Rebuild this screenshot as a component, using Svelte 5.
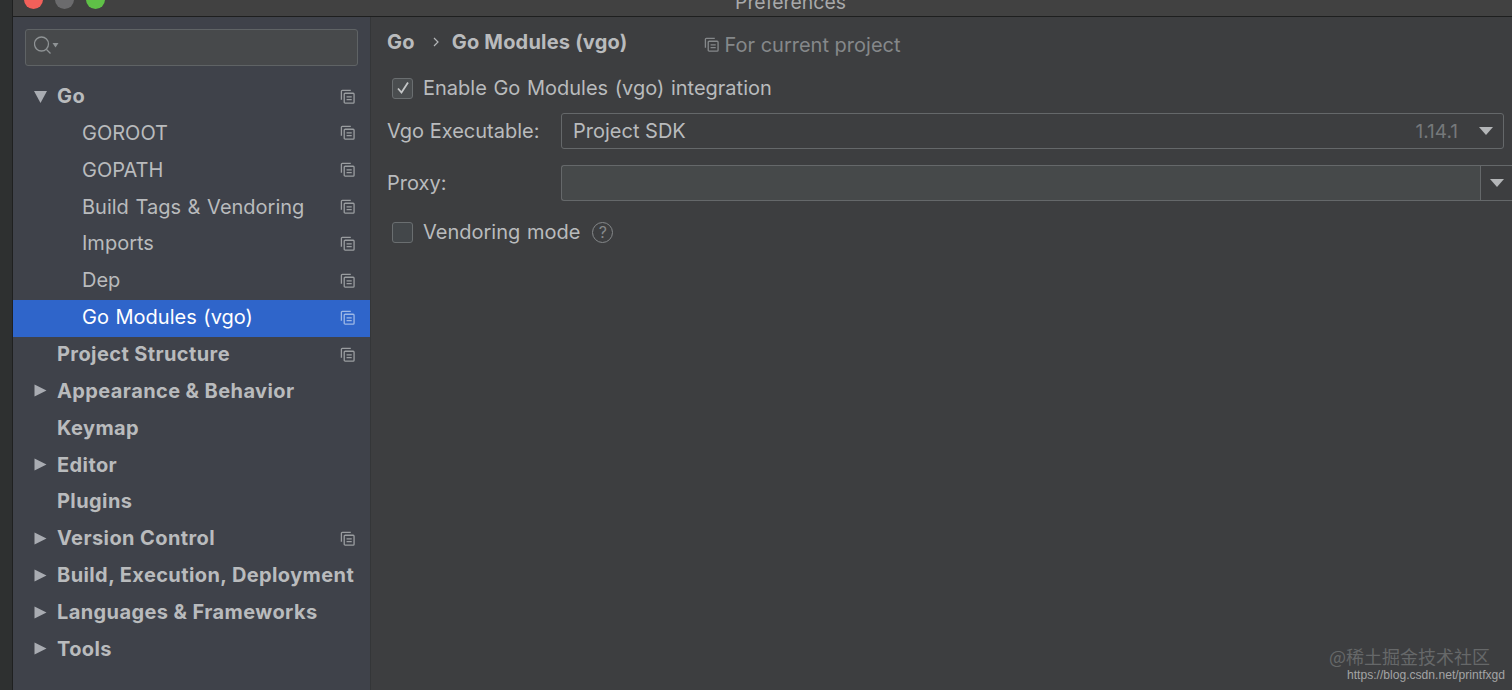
<script>
	const tree = [
		{ label: "Go", bold: true, arrow: "down", copy: true },
		{ label: "GOROOT", child: true, copy: true },
		{ label: "GOPATH", child: true, copy: true },
		{ label: "Build Tags & Vendoring", child: true, copy: true },
		{ label: "Imports", child: true, copy: true },
		{ label: "Dep", child: true, copy: true },
		{ label: "Go Modules (vgo)", child: true, copy: true, selected: true },
		{ label: "Project Structure", bold: true, copy: true },
		{ label: "Appearance & Behavior", bold: true, arrow: "right" },
		{ label: "Keymap", bold: true },
		{ label: "Editor", bold: true, arrow: "right" },
		{ label: "Plugins", bold: true },
		{ label: "Version Control", bold: true, arrow: "right", copy: true },
		{ label: "Build, Execution, Deployment", bold: true, arrow: "right" },
		{ label: "Languages & Frameworks", bold: true, arrow: "right" },
		{ label: "Tools", bold: true, arrow: "right" },
	]
</script>

{#snippet copyIcon()}
	<svg class="copy" width="15" height="15" viewBox="0 0 16 16" fill="none" stroke="currentColor" stroke-width="1.4">
		<path d="M11.5 1.500H2.500a1 1 0 0 0-1 1V11.500" />
		<rect x="4.500" y="4.500" width="10.500" height="10.500" rx="1" />
		<path d="M7 8.300h5.500M7 11.300h5.500" />
	</svg>
{/snippet}

<div class="screen">
	<div class="strip"></div>
	<div class="window">
		<header class="titlebar">
			<div class="lights">
				<span class="light red"></span>
				<span class="light grey"></span>
				<span class="light green"></span>
			</div>
			<span class="title">Preferences</span>
		</header>

		<div class="body">
			<aside class="sidebar">
				<div class="search">
					<svg width="26" height="24" viewBox="0 0 26 24" fill="none" stroke="#8f9395" stroke-width="1.300">
						<circle cx="7.500" cy="9" r="7" />
						<path d="M12.500 14.500l4 4" />
						<path d="M18.500 8h6l-3 4.500z" fill="#8f9395" stroke="none" />
					</svg>
				</div>
				<nav class="tree">
					{#each tree as row}
						<div class="row" class:child={row.child} class:bold={row.bold} class:selected={row.selected}>
							{#if row.arrow === "down"}
								<svg class="arrow" width="15" height="15" viewBox="0 0 15 15"><path d="M1 2h13l-6.500 12z" fill="#a9acb2" /></svg>
							{:else if row.arrow === "right"}
								<svg class="arrow" width="15" height="15" viewBox="0 0 15 15"><path d="M1.500 1.500l12 6-12 6z" fill="#a9acb2" /></svg>
							{/if}
							<span class="label">{row.label}</span>
							{#if row.copy}
								{@render copyIcon()}
							{/if}
						</div>
					{/each}
				</nav>
			</aside>

			<main class="content">
				<div class="crumbs">
					<span class="crumb">Go</span>
					<svg class="sep" width="8" height="12" viewBox="0 0 8 12" fill="none" stroke="#b4b6b8" stroke-width="1.200"><path d="M2 2l4 4-4 4" /></svg>
					<span class="crumb">Go Modules (vgo)</span>
					<span class="scope">
						{@render copyIcon()}
						For current project
					</span>
				</div>

				<div class="check-row first">
					<span class="box checked">
						<svg width="16" height="16" viewBox="0 0 16 16" fill="none" stroke="#c4c6c7" stroke-width="1.800"><path d="M3 8.500l3.500 4L13 2.500" /></svg>
					</span>
					<span>Enable Go Modules (vgo) integration</span>
				</div>

				<div class="field exec">
					<span class="field-label">Vgo Executable:</span>
					<div class="combo">
						<span>Project SDK</span>
						<span class="version">1.14.1</span>
						<svg class="caret" width="14" height="8" viewBox="0 0 14 8"><path d="M0 0h14l-7 8z" fill="#b4b6b8" /></svg>
					</div>
				</div>

				<div class="field proxy">
					<span class="field-label">Proxy:</span>
					<div class="proxy-input">
						<div class="proxy-text"></div>
						<div class="proxy-btn">
							<svg width="14" height="8" viewBox="0 0 14 8"><path d="M0 0h14l-7 8z" fill="#b4b6b8" /></svg>
						</div>
					</div>
				</div>

				<div class="check-row last">
					<span class="box"></span>
					<span>Vendoring mode</span>
					<span class="help">?</span>
				</div>

				<div class="watermark">
					<span class="wm-cn">@稀土掘金技术社区</span>
					<span class="wm-url">https://blog.csdn.net/printfxgd</span>
				</div>
			</main>
		</div>
	</div>
</div>

<style>
	:global(body) {
		margin: 0;
		background: #3d3e40;
	}

	.screen {
		display: flex;
		height: 690px;
		overflow: hidden;
		font-family: Inter, "Noto Sans", sans-serif;
		color: #b9bbbd;
	}

	.strip {
		width: 12px;
		flex: none;
		background: #2e3030;
		border-right: 1px solid #1f2020;
	}

	.window {
		flex: 1;
		display: flex;
		flex-direction: column;
		min-width: 0;
	}

	.titlebar {
		position: relative;
		height: 16px;
		flex: none;
		background: #414141;
		border-bottom: 1px solid #1e1f1f;
	}

	.lights {
		display: flex;
		gap: 12px;
		padding-left: 11px;
		margin-top: -10px;
	}

	.light {
		width: 19px;
		height: 19px;
		border-radius: 50%;
	}

	.red { background: #f2605a; }
	.grey { background: #6b6b6d; }
	.green { background: #5fc047; }

	.title {
		position: absolute;
		left: 722px;
		top: -10px;
		font-size: 19.400px;
		color: #a8a9aa;
	}

	.body {
		flex: 1;
		display: flex;
		min-height: 0;
	}

	.sidebar {
		width: 357px;
		flex: none;
		background: #3f424a;
		border-right: 1px solid #343638;
		padding-top: 12px;
	}

	.search {
		box-sizing: border-box;
		width: 333px;
		height: 37px;
		margin-left: 12px;
		padding: 5px 0 0 8px;
		background: #47494b;
		border: 1px solid #5f6365;
		border-radius: 3px;
	}

	.tree {
		margin-top: 12.600px;
	}

	.row {
		position: relative;
		box-sizing: border-box;
		display: flex;
		align-items: center;
		height: 36.870px;
		padding-left: 44px;
		padding-bottom: 2px;
		font-size: 20px;
		word-spacing: 1px;
		color: #b9bbbd;
	}

	.row.child {
		padding-left: 69px;
	}

	.row.bold .label {
		font-weight: 700;
		letter-spacing: 0.400px;
		word-spacing: 0;
	}

	.row.selected {
		background: #2f65ca;
		color: #fff;
	}

	.arrow {
		position: absolute;
		left: 20px;
		top: 10px;
	}

	.row .copy {
		position: absolute;
		right: 15px;
		top: 10px;
		color: #9a9da0;
	}

	.row.selected .copy {
		color: #9db8e6;
	}

	.content {
		position: relative;
		flex: 1;
		min-width: 0;
		background: #3d3e40;
		padding-left: 16px;
		font-size: 20px;
		color: #b9bbbd;
	}

	.crumbs {
		display: flex;
		align-items: center;
		height: 30px;
		margin-top: 10px;
	}

	.crumb {
		font-weight: 700;
		font-size: 20px;
		letter-spacing: 0.200px;
	}

	.sep {
		margin: 0 12px 0 17px;
	}

	.scope {
		display: flex;
		align-items: center;
		gap: 6px;
		margin-left: 76px;
		margin-top: 5px;
		color: #85888a;
	}

	.scope .copy {
		color: #85888a;
	}

	.check-row {
		display: flex;
		align-items: center;
		gap: 10px;
		padding-left: 5px;
		height: 30px;
		word-spacing: 1px;
	}

	.check-row.first {
		margin-top: 16px;
	}

	.check-row.last {
		margin-top: 16px;
	}

	.box {
		box-sizing: border-box;
		display: flex;
		align-items: center;
		justify-content: center;
		width: 21px;
		height: 21px;
		background: #43474a;
		border: 1px solid #6a6e70;
		border-radius: 3px;
	}

	.box.checked {
		background: #4a4d4f;
	}

	.help {
		display: flex;
		align-items: center;
		justify-content: center;
		box-sizing: border-box;
		width: 21px;
		height: 21px;
		margin-left: 2px;
		border: 1px solid #85888a;
		border-radius: 50%;
		font-size: 16px;
		color: #85888a;
	}

	.field {
		display: flex;
		align-items: center;
	}

	.field.exec {
		margin-top: 10px;
	}

	.field.proxy {
		margin-top: 16px;
	}

	.field-label {
		width: 174px;
		flex: none;
	}

	.combo {
		box-sizing: border-box;
		flex: 1;
		display: flex;
		align-items: center;
		height: 36px;
		padding: 0 10px 0 11px;
		margin-right: 8px;
		border: 1px solid #65686a;
		border-radius: 3px;
	}

	.version {
		margin-left: auto;
		font-size: 19px;
		color: #75787a;
	}

	.caret {
		margin-left: 21px;
	}

	.proxy-input {
		box-sizing: border-box;
		flex: 1;
		display: flex;
		height: 36px;
		border: 1px solid #65686a;
		border-right: none;
		border-radius: 3px 0 0 3px;
		background: #46494a;
	}

	.proxy-text {
		flex: 1;
	}

	.proxy-btn {
		display: flex;
		align-items: center;
		justify-content: center;
		width: 31px;
		background: #3d3e40;
		border-left: 1px solid #65686a;
	}

	.watermark {
		position: absolute;
		right: 7px;
		bottom: 7px;
		display: flex;
		flex-direction: column;
		align-items: flex-end;
	}

	.wm-cn {
		margin-right: 15px;
		font-family: "Noto Sans CJK SC", sans-serif;
		font-size: 18px;
		line-height: 22px;
		color: #666869;
	}

	.wm-url {
		font-family: "Liberation Sans", sans-serif;
		font-size: 12.100px;
		line-height: 16px;
		color: #a3a4a5;
	}
</style>
